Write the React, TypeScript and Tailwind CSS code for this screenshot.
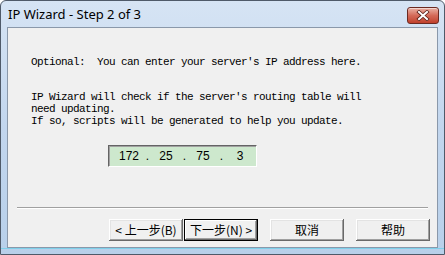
const mono = { fontFamily: '"Liberation Mono", "Noto Sans CJK SC", monospace' }

function CloseButton() {
  return (
    <div className="flex h-[17px] w-[32px] items-center justify-center rounded-[3px] border border-[#6b2a22] bg-gradient-to-b from-[#e8b0a4] via-[#d46a58] to-[#c0402c] shadow-[inset_0_1px_0_rgba(255,255,255,0.5)]">
      <svg width="14" height="11" viewBox="0 0 14 11">
        <path d="M3 2 L11 9 M11 2 L3 9" stroke="#5a1f18" strokeWidth="3.6" strokeLinecap="square" />
        <path d="M3 2 L11 9 M11 2 L3 9" stroke="#ffffff" strokeWidth="2" strokeLinecap="square" />
      </svg>
    </div>
  )
}

function Button({ label, isDefault = false, className = "" }: { label: string; isDefault?: boolean; className?: string }) {
  return (
    <div
      className={`flex h-[22px] w-[74px] items-center justify-center bg-[#f0f0f0] text-[12px] text-black ${
        isDefault
          ? "border border-black shadow-[inset_-1px_-1px_0_#696969,inset_1px_1px_0_#ffffff,inset_-2px_-2px_0_#a0a0a0]"
          : "shadow-[inset_-1px_-1px_0_#696969,inset_1px_1px_0_#ffffff,inset_-2px_-2px_0_#a0a0a0,inset_2px_2px_0_#e3e3e3]"
      } ${className}`}
      style={{ fontFamily: '"Noto Sans CJK SC", "Liberation Sans", sans-serif' }}
    >
      {label}
    </div>
  )
}

export default function App() {
  return (
    <div className="h-[255px] w-[445px] overflow-hidden bg-white">
      <div className="flex h-full w-full flex-col rounded-t-[6px] border border-[#4f5a69] bg-gradient-to-b from-[#d6e4f4] via-[#c2d6ee] to-[#b8d0ea]">
        {/* Title bar */}
        <div className="flex h-[26px] shrink-0 items-center justify-between pl-[7px] pr-[5px]">
          <span className="pt-[1px] text-[13px] text-black" style={{ fontFamily: '"Noto Sans", "Liberation Sans", sans-serif' }}>
            IP Wizard - Step 2 of 3
          </span>
          <div className="self-start pt-[6px]">
            <CloseButton />
          </div>
        </div>

        {/* Client area */}
        <div className="mx-[6px] flex flex-1 flex-col border border-[#8a98aa] bg-[#f0f0f0]">
          <div className="pl-[23px] pt-[28px] text-[11px] leading-[12px] tracking-[-0.6px] text-black" style={mono}>
            <p>Optional:&nbsp; You can enter your server&apos;s IP address here.</p>
            <p className="mt-[23px]">IP Wizard will check if the server&apos;s routing table will</p>
            <p>need updating.</p>
            <p>If so, scripts will be generated to help you update.</p>
          </div>

          {/* IP address field */}
          <div className="ml-[100px] mt-[18px] flex h-[22px] w-[149px] items-center border border-b-white border-l-[#646464] border-r-white border-t-[#646464] bg-[#cde8cd] pl-[6px] shadow-[inset_1px_1px_0_#a0a0a0] text-[12px] text-black" style={{ fontFamily: '"Liberation Sans", Arial, sans-serif' }}>
            <span className="w-[28px] text-center">172</span>
            <span className="w-[9px] text-center">.</span>
            <span className="w-[28px] text-center">25</span>
            <span className="w-[9px] text-center">.</span>
            <span className="w-[28px] text-center">75</span>
            <span className="w-[9px] text-center">.</span>
            <span className="w-[28px] text-center">3</span>
          </div>

          {/* Separator */}
          <div className="mx-[9px] mt-[40px] h-[2px] border-b border-t border-b-white border-t-[#a0a0a0]" />

          {/* Buttons */}
          <div className="mt-[10px] flex pl-[101px]">
            <Button label="< 上一步(B)" className="w-[74px]" />
            <Button label="下一步(N) >" isDefault className="ml-px" />
            <Button label="取消" className="ml-[12px]" />
            <Button label="帮助" className="ml-[12px]" />
          </div>
        </div>

        {/* Bottom frame */}
        <div className="h-[6px] shrink-0 border-t border-[#7fd0ea]" />
      </div>
    </div>
  )
}
